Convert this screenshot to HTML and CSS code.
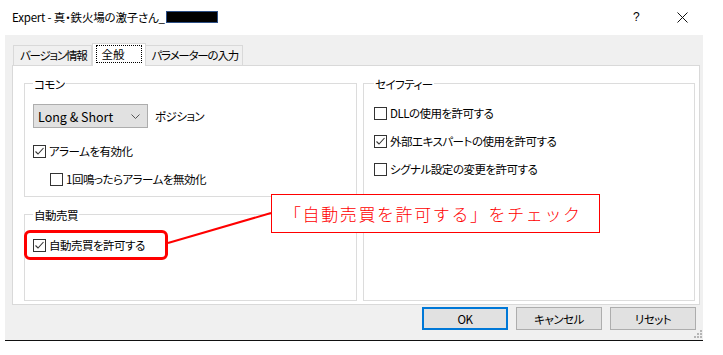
FILE: index.html
```html
<!DOCTYPE html>
<html lang="ja">
<head>
  <meta charset="UTF-8">
  <title>Expert</title>
  <link rel="stylesheet" href="styles.css">
</head>
<body>

  <div class="titlebar">
    <span class="title">Expert - 真・鉄火場の激子さん_<span class="redact"></span></span>
    <div class="title-btns">
      <span class="help">?</span>
      <span class="close">
        <svg width="11" height="11" viewBox="0 0 11 11"><path d="M0.5 0.5 L10.5 10.5 M10.5 0.5 L0.5 10.5" stroke="#111" stroke-width="1" fill="none"/></svg>
      </span>
    </div>
  </div>

  <div class="dialog">
    <div class="tabs">
      <div class="tab">バージョン情報</div>
      <div class="tab active"><span class="focus">全般</span></div>
      <div class="tab">パラメーターの入力</div>
    </div>

    <div class="panel">
      <div class="col">
        <div class="group common">
          <span class="legend">コモン</span>
          <div class="select-row">
            <div class="select">
              <span>Long &amp; Short</span>
              <svg width="9" height="5" viewBox="0 0 9 5"><path d="M0.5 0.5 L4.5 4.5 L8.5 0.5" stroke="#555" stroke-width="1" fill="none"/></svg>
            </div>
            <span class="select-label">ポジション</span>
          </div>
          <label class="check first">
            <span class="box checked"><svg width="11" height="11" viewBox="0 0 11 11"><path d="M1.5 5.5 L4 8 L9.5 2" stroke="#333" stroke-width="1.1" fill="none"/></svg></span>
            アラームを有効化
          </label>
          <label class="check sub">
            <span class="box"></span>
            1回鳴ったらアラームを無効化
          </label>
        </div>

        <div class="group auto">
          <span class="legend">自動売買</span>
          <label class="check highlight">
            <span class="box checked"><svg width="11" height="11" viewBox="0 0 11 11"><path d="M1.5 5.5 L4 8 L9.5 2" stroke="#333" stroke-width="1.1" fill="none"/></svg></span>
            自動売買を許可する
          </label>
        </div>
      </div>

      <div class="group safety">
        <span class="legend">セイフティー</span>
        <label class="check first">
          <span class="box"></span>
          DLLの使用を許可する
        </label>
        <label class="check">
          <span class="box checked"><svg width="11" height="11" viewBox="0 0 11 11"><path d="M1.5 5.5 L4 8 L9.5 2" stroke="#333" stroke-width="1.1" fill="none"/></svg></span>
          外部エキスパートの使用を許可する
        </label>
        <label class="check">
          <span class="box"></span>
          シグナル設定の変更を許可する
        </label>
      </div>
    </div>

    <div class="buttons">
      <button class="btn default">OK</button>
      <button class="btn">キャンセル</button>
      <button class="btn">リセット</button>
    </div>

    <svg class="grip" width="8" height="8" viewBox="0 0 8 8" fill="#b5b5b5">
      <rect x="6" y="0" width="2" height="2"/>
      <rect x="3" y="3" width="2" height="2"/><rect x="6" y="3" width="2" height="2"/>
      <rect x="0" y="6" width="2" height="2"/><rect x="3" y="6" width="2" height="2"/><rect x="6" y="6" width="2" height="2"/>
    </svg>
  </div>

  <!-- 注釈 -->
  <svg class="pointer" width="723" height="355"><line x1="168" y1="243" x2="271" y2="213" stroke="#f00" stroke-width="2"/></svg>
  <div class="callout">「自動売買を許可する」をチェック</div>

</body>
</html>
```

FILE: styles.css
```css
body {
  margin: 0;
  width: 723px;
  height: 355px;
  position: relative;
  overflow: hidden;
  background: #fff;
  font-family: "Noto Sans CJK JP", "Noto Sans", sans-serif;
  font-size: 11.5px;
  letter-spacing: -0.5px;
  font-feature-settings: "palt";
  color: #000;
}

.titlebar {
  height: 35px;
  display: flex;
  align-items: center;
  padding-left: 12px;
  padding-bottom: 1px;
  box-sizing: border-box;
}

.title {
  display: flex;
  align-items: center;
  letter-spacing: -0.2px;
}

.redact {
  display: inline-block;
  width: 50px;
  height: 10px;
  background: #000;
  border: 1px solid #2d4f86;
  margin-left: 1px;
}

.title-btns {
  margin-left: auto;
  display: flex;
  padding-right: 18px;
}

.help, .close {
  width: 46px;
  height: 30px;
  display: flex;
  align-items: center;
  justify-content: center;
}

.help {
  font-size: 12px;
  font-family: "Liberation Sans", sans-serif;
}

.dialog {
  position: relative;
  margin-left: 5px;
  width: 698px;
  height: 306px;
  box-sizing: border-box;
  background: #f0f0f0;
  border-bottom: 1px solid #111;
  padding: 8px 3px 0 7px;
}

.tabs {
  display: flex;
  align-items: flex-end;
  height: 22px;
  padding-left: 1px;
  position: relative;
  z-index: 1;
  letter-spacing: -1.2px;
}

.tab {
  height: 20px;
  box-sizing: border-box;
  border: 1px solid #d9d9d9;
  border-bottom: none;
  padding: 0 4px 0 6px;
  line-height: 19px;
  background: #f0f0f0;
}

.tab + .tab {
  border-left: none;
}

.tab.active {
  height: 23px;
  margin-bottom: -1px;
  background: #fff;
  border-left: 1px solid #d9d9d9;
  padding: 1px 3px 0 3px;
}

.tab.active + .tab {
  border-left: none;
}

.focus {
  display: block;
  height: 18px;
  line-height: 16px;
  padding: 0 16px 0 5px;
  border: 1px dotted #000;
  box-sizing: border-box;
  letter-spacing: 0;
}

.panel {
  height: 240px;
  box-sizing: border-box;
  background: #fff;
  border: 1px solid #d9d9d9;
  padding: 17px 4px 0 11px;
  display: flex;
  gap: 6px;
}

.col {
  width: 333px;
  display: flex;
  flex-direction: column;
  gap: 17px;
}

.group {
  border: 1px solid #dcdcdc;
  box-sizing: border-box;
  padding: 0 8px;
}

.legend {
  display: table;
  margin: -8px 0 0 0;
  padding: 0 1px;
  background: #fff;
  line-height: 16px;
}

.common {
  height: 114px;
}

.auto {
  height: 87px;
}

.safety {
  width: 332px;
  height: 218px;
  padding-left: 10px;
}

.select-row {
  display: flex;
  align-items: center;
  margin-top: 12px;
}

.select {
  width: 115px;
  height: 24px;
  box-sizing: border-box;
  background: #e1e1e1;
  border: 1px solid #adadad;
  display: flex;
  align-items: center;
  justify-content: space-between;
  padding: 0 7px 0 4px;
  font-size: 12.5px;
  letter-spacing: 0;
}

.select-label {
  margin-left: 7px;
}

.check {
  display: flex;
  align-items: center;
  gap: 3px;
  height: 16px;
  line-height: 16px;
  margin-top: 12px;
}

.check.first {
  margin-top: 13px;
}

.common .check.first {
  margin-top: 15px;
}

.check.sub {
  margin-left: 17px;
}

.box {
  width: 13px;
  height: 13px;
  box-sizing: border-box;
  border: 1px solid #333;
  background: #fff;
  display: flex;
  align-items: center;
  justify-content: center;
}

.check.highlight {
  width: 144px;
  height: 30px;
  box-sizing: border-box;
  margin: 7px 0 0 -9px;
  padding-left: 6px;
  border: 3px solid #f00;
  border-radius: 6px;
}

.buttons {
  display: flex;
  justify-content: flex-end;
  gap: 8px;
  margin-top: 2px;
  padding-right: 4px;
}

.btn {
  width: 86px;
  height: 23px;
  background: #e1e1e1;
  border: 1px solid #adadad;
  font-family: inherit;
  font-size: 11.5px;
  letter-spacing: -0.5px;
  font-feature-settings: "palt";
  color: #000;
  padding: 0;
}

.btn.default {
  border: 2px solid #0078d7;
}

.grip {
  position: absolute;
  right: 1px;
  bottom: 2px;
}

.pointer {
  position: absolute;
  left: 0;
  top: 0;
  pointer-events: none;
}

.callout {
  position: absolute;
  left: 271px;
  top: 194px;
  width: 329px;
  height: 39px;
  box-sizing: border-box;
  border: 1px solid #f00;
  background: #fff;
  color: #f00;
  font-size: 17px;
  font-weight: 300;
  font-feature-settings: normal;
  letter-spacing: 1.6px;
  line-height: 37px;
  padding-left: 12px;
}
```
